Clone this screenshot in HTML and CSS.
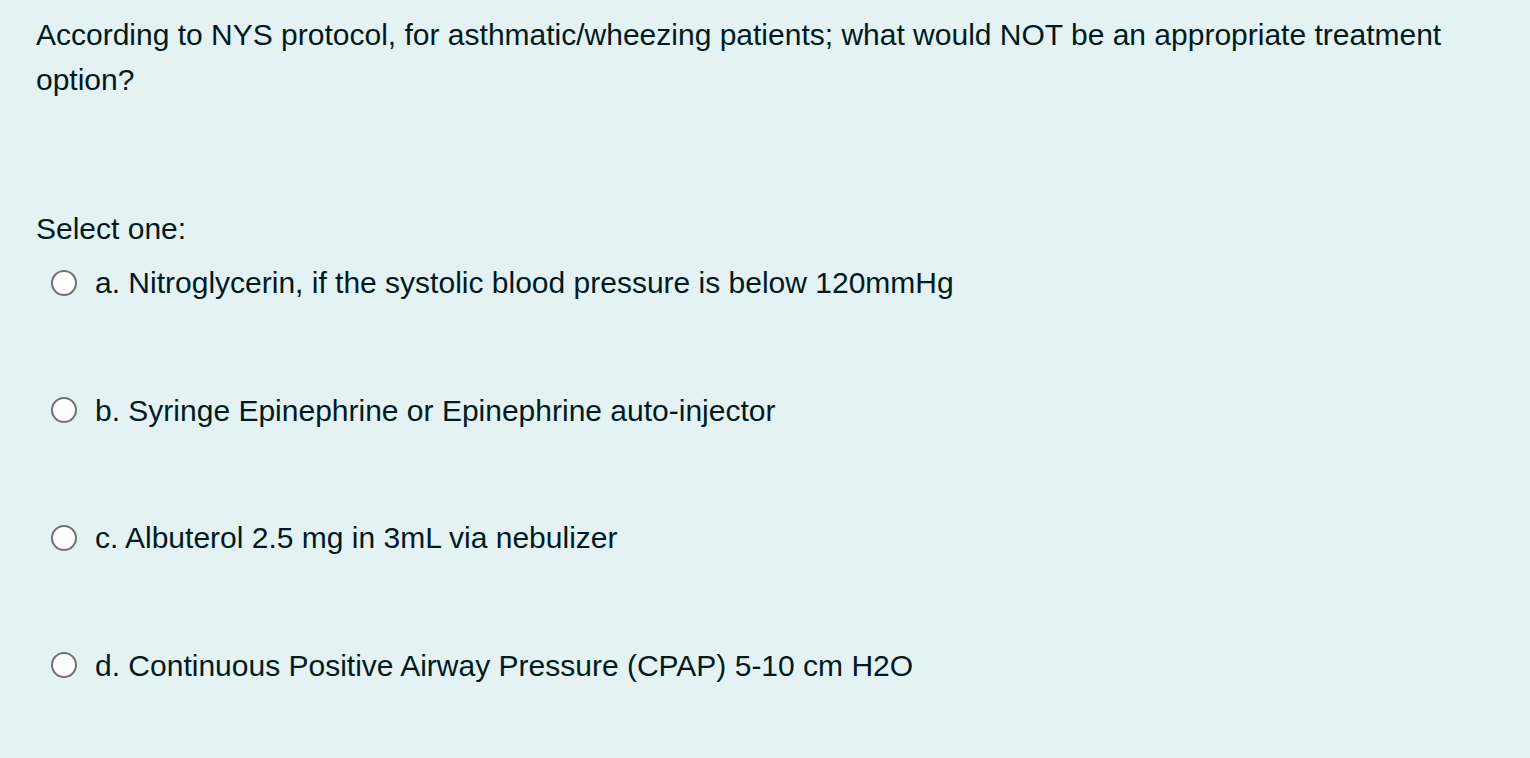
FILE: index.html
```html
<!DOCTYPE html>
<html lang="en">
<head>
<meta charset="utf-8">
<title>Question</title>
<link rel="stylesheet" href="styles.css">
</head>
<body>
<div class="formulation">
  <div class="qtext">According to NYS protocol, for asthmatic/wheezing patients; what would NOT be an appropriate treatment option?</div>
  <div class="prompt">Select one:</div>
  <div class="answers">
    <label class="answer"><span class="radio"></span><span class="label">a. Nitroglycerin, if the systolic blood pressure is below 120mmHg</span></label>
    <label class="answer"><span class="radio"></span><span class="label">b. Syringe Epinephrine or Epinephrine auto-injector</span></label>
    <label class="answer"><span class="radio"></span><span class="label">c. Albuterol 2.5 mg in 3mL via nebulizer</span></label>
    <label class="answer"><span class="radio"></span><span class="label">d. Continuous Positive Airway Pressure (CPAP) 5-10 cm H2O</span></label>
  </div>
</div>
</body>
</html>
```
FILE: styles.css
```css
html, body {
  margin: 0;
  padding: 0;
  background: #e4f2f4;
  height: 100%;
}
body {
  font-family: "Liberation Sans", Arial, Helvetica, sans-serif;
  font-size: 30px;
  line-height: 45px;
  color: #001a1e;
}
.formulation {
  padding: 12px 36px 0 36px;
}
.qtext {
  margin: 0;
}
.prompt {
  margin-top: 104px;
}
.answers {
  margin-top: 9px;
  display: flex;
  flex-direction: column;
  gap: 82.5px;
}
.answer {
  display: flex;
  align-items: center;
  padding-left: 15px;
}
.radio {
  box-sizing: border-box;
  width: 26px;
  height: 26px;
  border: 2px solid #727272;
  border-radius: 50%;
  background: #ffffff;
  flex: none;
  margin-right: 18px;
}
```
